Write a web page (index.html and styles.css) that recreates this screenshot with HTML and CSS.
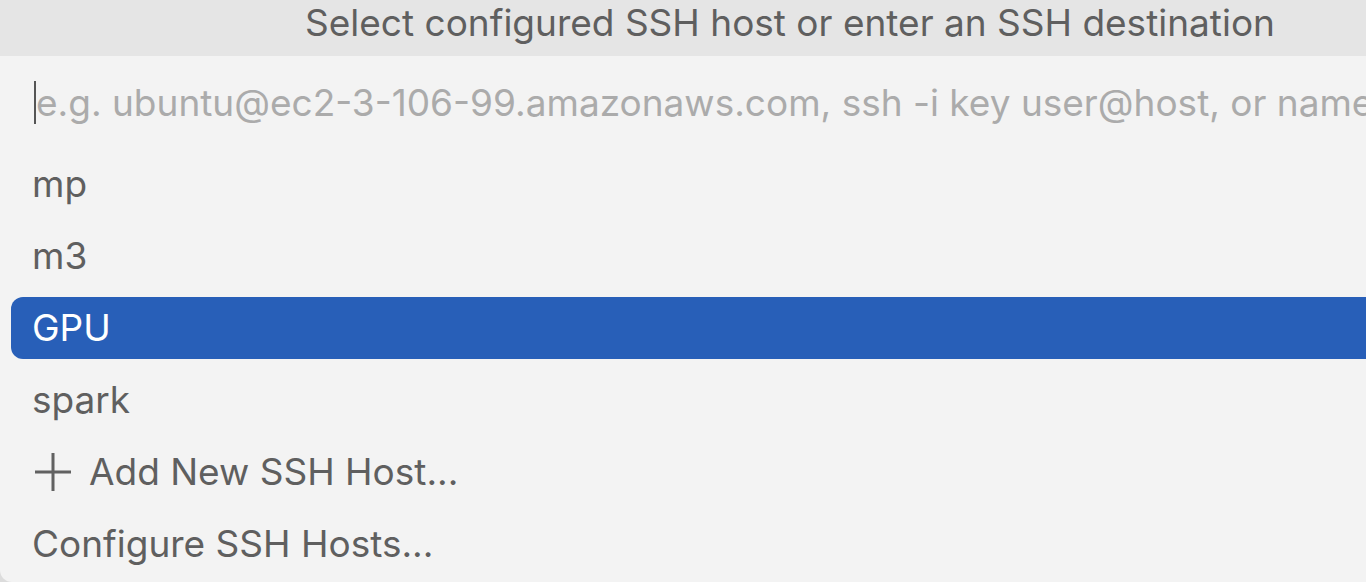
FILE: index.html
```html
<!DOCTYPE html>
<html lang="en">
<head>
<meta charset="utf-8">
<title>Select SSH host</title>
<link rel="stylesheet" href="styles.css">
</head>
<body>
<div class="quick-pick">
  <div class="title">Select configured SSH host or enter an SSH destination</div>
  <div class="input-row">
    <span class="caret"></span><span class="placeholder">e.g. ubuntu@ec2-3-106-99.amazonaws.com, ssh -i key user@host, or named host from config file</span>
  </div>
  <ul class="list">
    <li class="item">mp</li>
    <li class="item">m3</li>
    <li class="item selected">GPU</li>
    <li class="item">spark</li>
    <li class="item with-icon">
      <svg class="plus" width="36" height="38" viewBox="0 0 36 38"><path d="M0 19H36M18 0V38" stroke="#616161" stroke-width="3" fill="none"/></svg>
      <span>Add New SSH Host...</span>
    </li>
    <li class="item">Configure SSH Hosts...</li>
  </ul>
</div>
</body>
</html>
```
FILE: styles.css
```css
html, body {
  margin: 0;
  padding: 0;
  background: #dcdcdc;
  overflow: hidden;
  height: 582px;
}
.quick-pick {
  width: 1580px;
  height: 582px;
  background: #f3f3f3;
  border-bottom-left-radius: 12px;
  font-family: Inter, "Noto Sans", sans-serif;
  color: #5f5f5f;
  overflow: hidden;
}
.title {
  height: 56px;
  background: #e5e5e5;
  display: flex;
  align-items: center;
  justify-content: center;
  font-size: 37px;
  padding-bottom: 12px;
  box-sizing: border-box;
  white-space: nowrap;
}
.input-row {
  height: 97px;
  display: flex;
  align-items: center;
  padding-left: 34px;
  box-sizing: border-box;
  white-space: nowrap;
  font-size: 37px;
  padding-bottom: 5px;
}
.caret {
  display: inline-block;
  width: 2px;
  height: 43px;
  background: #555;
  flex: none;
}
.placeholder {
  color: #ababab;
}
.list {
  list-style: none;
  margin: 0;
  padding: 0 0 0 11px;
  display: flex;
  flex-direction: column;
  gap: 10px;
}
.item {
  height: 62px;
  display: flex;
  align-items: center;
  padding-left: 21px;
  padding-bottom: 1px;
  box-sizing: border-box;
  font-size: 37px;
  border-radius: 12px 0 0 12px;
  white-space: nowrap;
}
.item.selected {
  background: #285fb8;
  color: #ffffff;
}
.item.with-icon {
  padding-left: 24px;
}
.plus {
  margin-right: 18px;
  flex: none;
}
```
